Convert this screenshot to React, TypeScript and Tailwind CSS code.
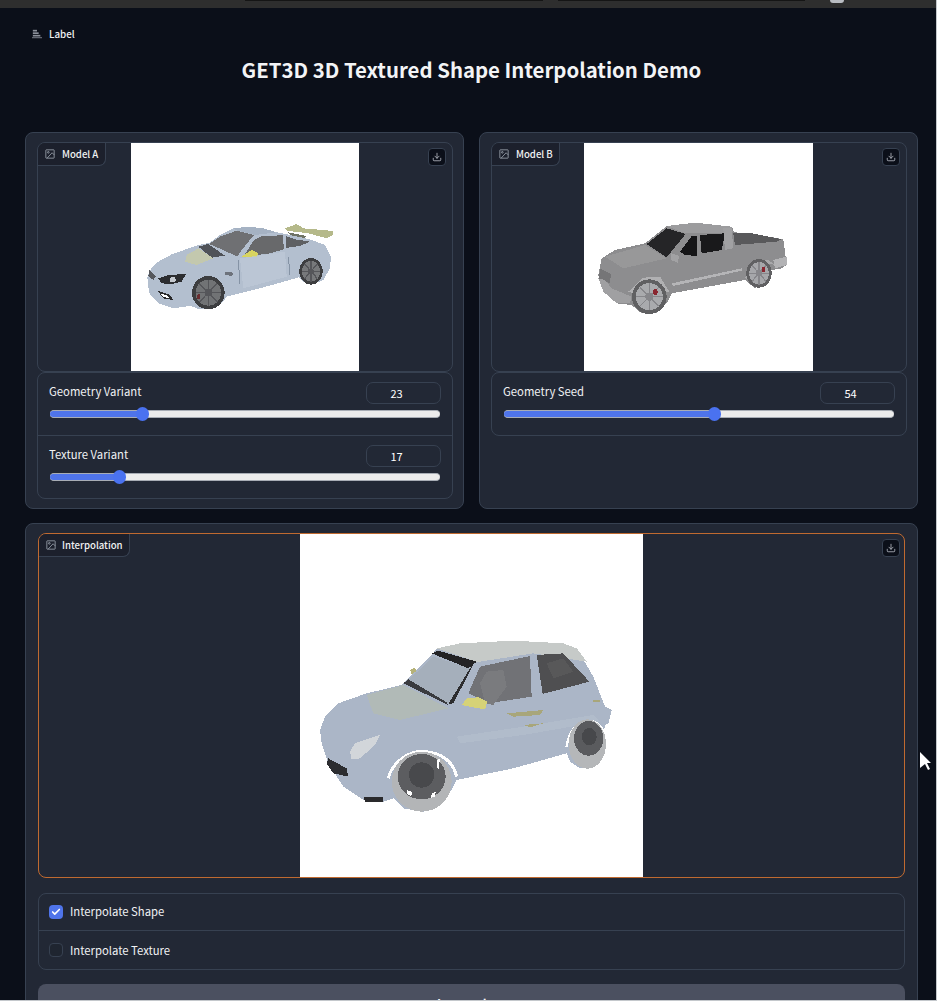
import type { ReactNode } from "react";
import { Check, Download } from "lucide-react";

function ImageGlyph() {
  return (
    <svg viewBox="0 0 24 24" className="w-[10px] h-[10px] text-[#9ca3af]" fill="none" stroke="currentColor" strokeWidth="2">
      <rect x="2" y="2" width="20" height="20" rx="1" />
      <circle cx="8" cy="8" r="2" />
      <path d="M22 14l-5-5L5 22" />
    </svg>
  );
}

function ChartGlyph() {
  return (
    <svg viewBox="0 0 12 12" className="w-[10px] h-[10px] text-[#8b909a]" fill="currentColor">
      <rect x="1" y="1" width="5" height="2" />
      <rect x="1" y="4" width="7" height="2" />
      <rect x="1" y="7" width="9" height="2" />
      <rect x="0" y="10" width="12" height="1" />
    </svg>
  );
}

function DownloadBtn() {
  return (
    <button className="w-[18px] h-[18px] rounded-[4px] border border-[#374151] bg-[#0b0f19] flex items-center justify-center text-[#b4b8c0]">
      <Download size={10} strokeWidth={2} />
    </button>
  );
}

function Wheel({ cx, cy, rx, ry, tire, rim, spoke, brake }: { cx: number; cy: number; rx: number; ry: number; tire: string; rim: string; spoke: string; brake?: string }) {
  const ix = rx * 0.78;
  const iy = ry * 0.78;
  return (
    <g>
      <ellipse cx={cx} cy={cy} rx={rx} ry={ry} fill={tire} />
      <ellipse cx={cx} cy={cy} rx={ix} ry={iy} fill={rim} />
      <g stroke={spoke} strokeWidth="4">
        <path d={`M${cx - ix} ${cy}H${cx + ix}M${cx} ${cy - iy}V${cy + iy}`} />
        <path d={`M${cx - ix * 0.7} ${cy - iy * 0.7}L${cx + ix * 0.7} ${cy + iy * 0.7}M${cx + ix * 0.7} ${cy - iy * 0.7}L${cx - ix * 0.7} ${cy + iy * 0.7}`} />
      </g>
      <ellipse cx={cx} cy={cy} rx={ix * 0.3} ry={iy * 0.3} fill={spoke} />
      {brake && <ellipse cx={cx + ix * 0.45} cy={cy - iy * 0.35} rx={ix * 0.16} ry={iy * 0.25} fill={brake} />}
    </g>
  );
}

function SportsCar() {
  return (
    <svg viewBox="0 0 228 228" className="w-full h-full" shapeRendering="crispEdges">
      <g transform="translate(-1 57) scale(0.33333)">
        <path d="M465 85l35-13 20 13 90 8v12l-20 10-55-15-65-8z" fill="#b5b98a" />
        <path d="M475 97l55 11-10 12-40-14z" fill="#6e7264" />
        <path d="M52 232l10-24 23-23 40-22 80-28 35-7 30-23 40-20 45-5 45 5 40 12 40 8 60 13 45 17 18 35-3 35-20 35-30 12-30-7-15-13-25 8-80 22-110 28-15 20-30 18h-35l-30-10-50 7-45-15-25-25-5-25z" fill="#b3bfcf" />
        <path d="M310 85l45-5 45 5 40 12-65 8-53-13z" fill="#a5b2c3" />
        <path d="M238 132l32-22 50-18 52 13-37 45-13 20-32-15z" fill="#6f7073" />
        <path d="M340 170l32-50 23-12 63-2 4 42-42 12z" fill="#68696b" />
        <path d="M468 108l27 10 45 7-30 13-42 6z" fill="#5e6063" />
        <path d="M205 140l30-8 50 35-40 6z" fill="#4f5258" />
        <path d="M170 165l35-20 45 30-50 20-35-10z" fill="#c3c8ae" />
        <path d="M335 170l30-20 20 10-5 12z" fill="#d8d460" />
        <path d="M325 180l5 72M475 170l5 56" stroke="#8593a5" strokeWidth="3" fill="none" />
        <path d="M330 175l10 90 130-35-5-75z" fill="#c0cbd9" opacity="0.6" />
        <path d="M58 210l20 20-8 10-15-12z" fill="#55575c" />
        <path d="M85 235l30-10 53-3-13 23-30 7-30-2z" fill="#2c2d30" />
        <ellipse cx="128" cy="239" rx="9" ry="8" fill="#c5c9cf" />
        <path d="M82 272l38 13 10 15-30-5z" fill="#2a2a2c" />
        <path d="M92 280l22 8 3 6-18-3z" fill="#fff" />
        <path d="M285 215l25 3-3 10-22-3z" fill="#6d727b" />
        <Wheel cx={235} cy={278} rx={49} ry={50} tire="#3d3e40" rim="#717375" spoke="#55565a" />
        <ellipse cx="206" cy="290" rx="5" ry="8" fill="#6a2d30" />
        <Wheel cx={543} cy={214} rx={35} ry={40} tire="#3d3e40" rim="#77797b" spoke="#55565a" />
      </g>
    </svg>
  );
}

function Truck() {
  return (
    <svg viewBox="0 0 229 228" className="w-full h-full" shapeRendering="crispEdges">
      <g transform="translate(1 57) scale(0.33333)">
        <path d="M40 225l10-50 40-25 90-20 65-52 85-10 110 12 8 17 52 3 95 18 7 52 3 25-15 10-30 5-15 35-35 20-30-25-220 40-15 30-30 30h-45l-30-25-45-5-40-35z" fill="#8d8d8f" />
        <path d="M245 78l85-10 110 12 3 17-103 3-40 0z" fill="#9c9c9e" />
        <path d="M185 132l60-47 57 17-57 70z" fill="#252527" />
        <path d="M285 155l35-47 15 0v60l-35-3z" fill="#151517" />
        <path d="M345 105l75-5-10 50-60 10z" fill="#19191b" />
        <path d="M445 100l55 0 90 18-15 7-125 10z" fill="#59595b" />
        <path d="M415 85l25 0 5 60-25 5z" fill="#a1a1a3" />
        <path d="M60 170l120-35 65 40-130 30z" fill="#989899" />
        <path d="M45 205l33 17-3 28-33-15z" fill="#757577" />
        <path d="M40 235l15 40 40 35h40l5-20-60-25-20-25z" fill="#a0a0a2" />
        <path d="M260 250l210-45v7l-205 46z" fill="#b5b5b7" />
        <path d="M258 160l25 8-5 20-20-8z" fill="#a2a2a4" />
        <path d="M130 275l45-42 50-3 28 45-20 5-20-35-45 0-25 35z" fill="#b0b0b2" />
        <path d="M480 235l30-50 40-5 20 15-25-5-35 8-20 40z" fill="#a9a9ab" />
        <Wheel cx={193} cy={290} rx={52} ry={52} tire="#606062" rim="#a9aaad" spoke="#86868a" brake="#8a2630" />
        <Wheel cx={522} cy={220} rx={38} ry={43} tire="#606062" rim="#a6a7aa" spoke="#86868a" brake="#8a2630" />
        <path d="M565 180l40-10v25l-35 10z" fill="#b3b3b5" />
      </g>
    </svg>
  );
}

function Hatchback() {
  return (
    <svg viewBox="0 0 343 343" className="w-full h-full" shapeRendering="crispEdges">
      <g transform="translate(0 86) scale(0.33333)">
        <path d="M60 330l15-40 40-40 85-30 105-25 90-90 15-20 70-15 160-8 150 8 40 15 50 85 35 90 20 10-10 40-10 5-10 70-35 45-30 15-30-20-10-25-160 45-170 35-15 30-35 45-50 20-60-10-30-30-30 10-60-5-60-40-45-70-20-60z" fill="#abb6c7" />
        <path d="M410 85l70-15 160-8 150 8 40 15 30 40-160-25-160 25h-10z" fill="#c6cac8" />
        <path d="M315 190l85-80 110 35-65 105z" fill="#a5afbb" />
        <path d="M395 100l20-8 115 33-25 20z" fill="#232325" />
        <path d="M510 145l15-20-65 125-15 2z" fill="#2d2d2f" />
        <path d="M310 190l135 65-5-8-115-69z" fill="#3a3b3f" />
        <path d="M505 220l35-80 150-32 5 122-130 20z" fill="#717276" />
        <path d="M540 190l20-35 50-5 10 50-40 55-25-5z" fill="#7a7b7e" />
        <path d="M710 105l80-5 78 85-140 37z" fill="#4f4f51" />
        <path d="M740 130l50-15 30 40-60 20z" fill="#585859" />
        <path d="M200 225l110-30 135 70-145 35-80-20z" fill="#bcc0a0" opacity="0.4" />
        <path d="M470 350l200-30 210-35 20 20-230 40-190 25z" fill="#b8c2d0" opacity="0.5" />
        <path d="M500 235l35-3 27 13-7 23-35-6-35-7z" fill="#d6d277" />
        <path d="M330 150l15-8 5 12-15 8z" fill="#b6b278" />
        <path d="M150 395l15-25 75-25-15 30-45 40-25 3z" fill="#d2d6da" />
        <path d="M85 415l55 30 5 25-45-10-20-30z" fill="#2c2d30" />
        <path d="M190 530h60v15l-55 0z" fill="#2a2a2c" />
        <path d="M670 315l60-5-40 12zM620 280l110-10-10 15-80 5zM880 240h20v6h-20z" fill="#a8a67a" />
        <path d="M265 475c10-45 60-85 110-80 50 3 85 30 95 75" fill="none" stroke="#fff" strokeWidth="9" />
        <ellipse cx="365" cy="485" rx="90" ry="90" fill="#b3b5b7" />
        <ellipse cx="365" cy="470" rx="72" ry="68" fill="#5c5d60" />
        <ellipse cx="365" cy="465" rx="38" ry="38" fill="#48494c" />
        <path d="M320 510l18 6-4 12-14-6zM395 520l12-4-3 14-10 3zM410 420l10-4-4 30-5-2z" fill="#fff" />
        <path d="M800 380c5-45 30-75 65-78 30 0 48 25 50 55" fill="none" stroke="#fff" strokeWidth="7" />
        <ellipse cx="862" cy="372" rx="56" ry="74" fill="#b5b7b9" />
        <ellipse cx="866" cy="355" rx="44" ry="52" fill="#5a5b5e" />
        <ellipse cx="868" cy="350" rx="22" ry="26" fill="#47484b" />
      </g>
    </svg>
  );
}

function SliderRow({ label, value, pct }: { label: string; value: string; pct: number }) {
  return (
    <div className="h-[63px] last:h-[62px] px-[11px] pt-[9px]">
      <div className="flex justify-between items-start h-[22px]">
        <span className="text-[11.3px] leading-[18px] text-[#f0f1f3]">{label}</span>
        <div className="w-[75px] h-[22px] rounded-[7px] border border-[#374151] text-[11px] leading-[20px] text-center pr-[14px] text-white">{value}</div>
      </div>
      <div className="relative mt-[6px] ml-px mr-[1px] h-[8px] rounded-full bg-[#ececec] border-y border-[#a8adb5]">
        <div className="h-[6px] rounded-l-full bg-[#4f74ea]" style={{ width: `${pct}%` }} />
        <div className="absolute top-[-4px] w-[13px] h-[14px] rounded-full bg-[#4a72f0]" style={{ left: `calc(${pct}% - 6px)` }} />
      </div>
    </div>
  );
}

function Tag({ label, className }: { label: string; className: string }) {
  return (
    <div className={`absolute z-10 top-0 left-0 h-[23px] flex items-center pl-[7px] border-r border-b border-[#374151] rounded-br-[7px] bg-[#1c202c] text-[9.6px] font-medium text-[#f0f1f3] ${className}`}>
      <ImageGlyph />
      {label}
    </div>
  );
}

function ModelPanel({ label, car, imageClass, rows }: { label: string; car: ReactNode; imageClass: string; rows: { label: string; value: string; pct: number }[] }) {
  return (
    <section className="flex-1 h-[377px] rounded-[8px] border border-[#374151] bg-[#222835] pl-[11px] pr-[10px] pt-[9px]">
      <div className="relative h-[230px] rounded-[8px] border border-[#374151] flex justify-center overflow-hidden">
        <Tag label={label} className="w-[68px] gap-[7px]" />
        <div className={`h-[228px] bg-white ${imageClass}`}>{car}</div>
        <div className="absolute top-[5px] right-[6px]"><DownloadBtn /></div>
      </div>
      <div className="rounded-[8px] border border-[#374151] divide-y divide-[#374151]">
        {rows.map((r) => <SliderRow key={r.label} {...r} />)}
      </div>
    </section>
  );
}

export default function App() {
  return (
    <div className="relative w-[937px] h-[1001px] overflow-hidden border-r border-b border-[#c4c8cc] bg-[#0b0f19] font-['Noto_Sans_CJK_SC','Noto_Sans',sans-serif]">
      <div className="h-2 bg-[#2e2e2e] flex">
        <div className="ml-[245px] w-[298px] h-px bg-[#151515]" />
        <div className="ml-[15px] w-[247px] h-px bg-[#151515]" />
        <div className="ml-[25px] w-[14px] h-[3px] rounded-b-full bg-[#b9bcc2]" />
      </div>
      <main className="pl-[25px] pr-[18px]">
        <div className="flex items-center gap-[7px] pl-[7px] pt-[19px] h-[33px] text-[9.8px] font-medium text-[#f0f1f3]">
          <ChartGlyph />
          Label
        </div>
        <h1 className="mt-[8px] text-center text-[20.4px] leading-[40px] font-semibold text-[#f3f4f6]">GET3D 3D Textured Shape Interpolation Demo</h1>
        <div className="flex gap-[15px] mt-[43px]">
          <ModelPanel
            label="Model A"
            car={<SportsCar />}
            imageClass="w-[228px]"
            rows={[
              { label: "Geometry Variant", value: "23", pct: 23.6 },
              { label: "Texture Variant", value: "17", pct: 17.8 },
            ]}
          />
          <ModelPanel
            label="Model B"
            car={<Truck />}
            imageClass="w-[229px] mr-px"
            rows={[{ label: "Geometry Seed", value: "54", pct: 53.8 }]}
          />
        </div>
        <section className="mt-[14px] rounded-t-[8px] border border-[#374151] bg-[#222835] px-[12px] pt-[9px] pb-[20px]">
          <div className="relative h-[345px] rounded-[8px] border border-[#c06a30] flex justify-center overflow-hidden">
            <Tag label="Interpolation" className="w-[91px] gap-[6px]" />
            <div className="w-[343px] h-[343px] bg-white"><Hatchback /></div>
            <div className="absolute top-[5px] right-[4px]"><DownloadBtn /></div>
          </div>
          <div className="mt-[15px] rounded-[8px] border border-[#374151] divide-y divide-[#374151] text-[11.3px] text-[#f0f1f3]">
            <label className="flex items-center gap-[7px] h-[37px] px-[10px] pb-px">
              <span className="w-[14px] h-[14px] rounded-[4px] bg-[#4f74ea] flex items-center justify-center text-white"><Check size={10} strokeWidth={4} /></span>
              Interpolate Shape
            </label>
            <label className="flex items-center gap-[7px] h-[38px] px-[10px]">
              <span className="w-[14px] h-[14px] rounded-[4px] border border-[#374151] bg-[#1f2530]" />
              Interpolate Texture
            </label>
          </div>
          <button className="mt-[14px] w-full h-[40px] rounded-[8px] bg-[#4b5060] text-[12.5px] font-semibold text-[#f3f4f6]">Interpolate</button>
        </section>
      </main>
      <svg viewBox="0 0 12 18" className="absolute left-[920px] top-[752px] w-[12px] h-[18px]">
        <path d="M0 0l11 11H7l3 6-2 1-3-6-5 4z" fill="#fff" />
      </svg>
    </div>
  );
}
